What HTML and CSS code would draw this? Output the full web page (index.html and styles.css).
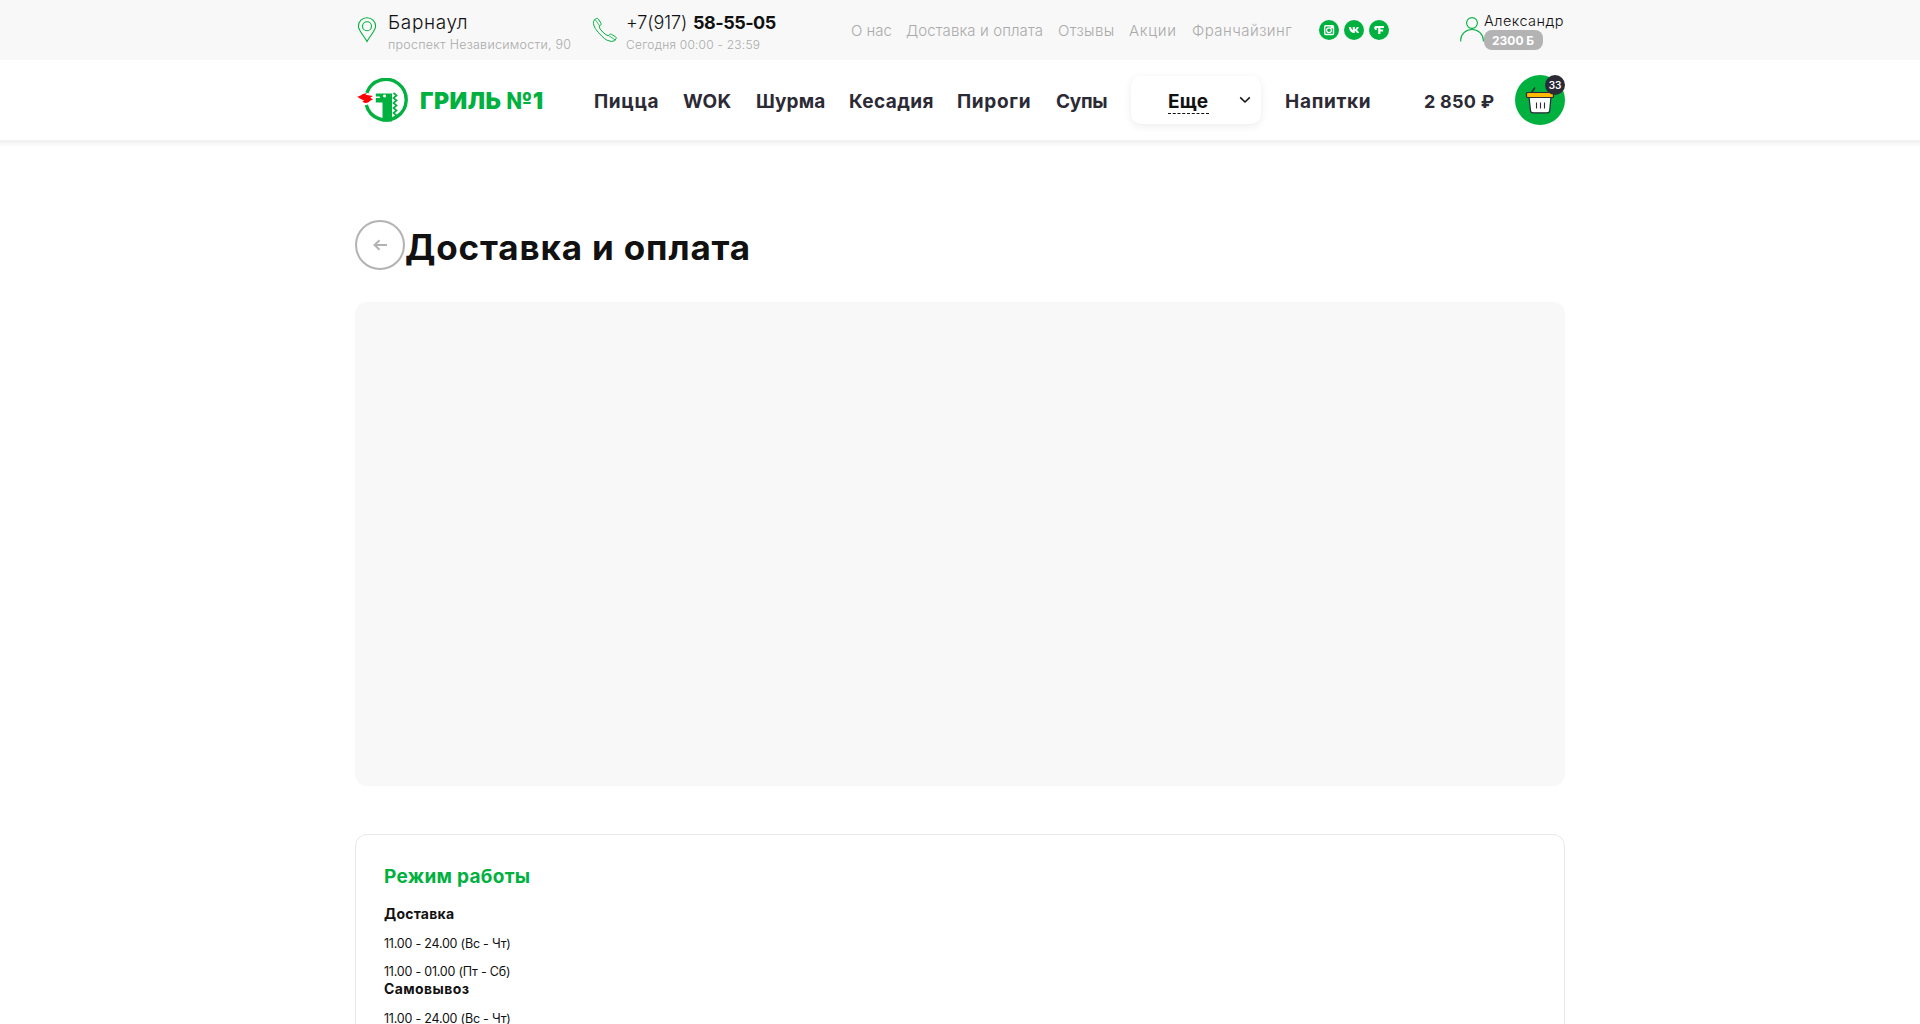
FILE: index.html
```
<!DOCTYPE html>
<html lang="ru">
<head>
<meta charset="utf-8">
<title>Доставка и оплата — Гриль №1</title>
<link rel="stylesheet" href="styles.css">
</head>
<body>
<header class="header">
  <div class="topbar">
    <div class="container topbar-row">
      <svg class="pin" width="20" height="26" viewBox="0 0 20 26" fill="none" stroke="#00b140" stroke-width="1.1"><path d="M10 24.5C8 20 1.4 13.800 1.400 9.300A8.600 8.600 0 0 1 18.600 9.300C18.600 13.800 12 20 10 24.500Z"/><circle cx="10" cy="9.300" r="4.500"/></svg>
      <div class="contact city">
        <a class="contact-main city-name">Барнаул</a>
        <span class="contact-sub city-address">проспект Независимости, 90</span>
      </div>
      <svg class="phone-icon" width="26" height="26" viewBox="0 0 26 26" fill="none" stroke="#00b140" stroke-width="1" stroke-linejoin="round"><path d="M2.400 2.800 4.600 1.400Q5.600 1 6.300 2L9 6.400Q9.500 7.500 8.600 8.200L7.300 9.200Q6.900 11.300 10.700 15T16.300 18.700L17.500 17.500Q18.300 16.800 19.400 17.300L23.600 19.800Q24.700 20.500 24 21.600L22.800 23.600Q20 25.600 15.200 23.300T3.200 11.400Q.2 6 2.400 2.800Z"/><path d="M3.200 2.400 7.600 9M16.500 18.500 23.300 23" stroke-width=".8"/></svg>
      <div class="contact phone">
        <a class="contact-main"><span class="phone-code">+7(917)</span><b class="phone-number">58-55-05</b></a>
        <span class="contact-sub phone-hours">Сегодня 00:00 - 23:59</span>
      </div>
      <nav class="links">
        <a class="link-about">О нас</a><a class="link-delivery">Доставка и оплата</a><a class="link-reviews">Отзывы</a><a class="link-offers">Акции</a><a class="link-franchise">Франчайзинг</a>
      </nav>
      <div class="socials">
        <svg width="20" height="20" viewBox="0 0 20 20"><circle cx="10" cy="10" r="10" fill="#00b140"/><rect x="5.700" y="5.700" width="8.800" height="8.800" rx="1" fill="none" stroke="#fff" stroke-width="1.400"/><circle cx="10" cy="10.200" r="2.400" fill="none" stroke="#fff" stroke-width="1.200"/><path d="M11.500 6h2.500v2.300h-2.500z" fill="#fff"/></svg>
        <svg width="20" height="20" viewBox="0 0 20 20"><circle cx="10" cy="10" r="10" fill="#00b140"/><path fill="#fff" d="M5 7h2c.3 1.500 1.100 2.900 1.800 3.100V7h2v2.400C11.600 9.200 12.400 8 12.800 7h2c-.3 1.200-1.100 2.300-1.900 3 .9.600 1.700 1.500 2.200 3h-2.200c-.4-1-1.100-1.700-2.100-1.900V13h-.5C7.100 13 5.300 10.800 5 7Z"/></svg>
        <svg width="20" height="20" viewBox="0 0 20 20"><circle cx="10" cy="10" r="10" fill="#00b140"/><path fill="#fff" d="M6.600 6H15v2.100h-3.600v1.300h2.700v2h-2.700V14H9.200V8.100H7.700v1.800H5.800V8.500H5Q5 6 6.600 6Z"/></svg>
      </div>
      <svg class="user-icon" width="24" height="26" viewBox="0 0 24 26" fill="none" stroke="#00b140" stroke-width="1.100"><circle cx="12" cy="6" r="5.400"/><path d="M.700 24.500V23A11.300 10.500 0 0 1 23.300 23v1.500"/></svg>
      <div class="user">
        <a class="user-name">Александр</a>
        <span class="bonus">2300 Б</span>
      </div>
    </div>
  </div>
  <div class="container nav-row">
    <a class="logo">
      <svg width="52" height="46" viewBox="0 0 52 46"><path d="M9.800 14.800A20.300 20.300 0 1 1 9.300 27" fill="none" stroke="#00b140" stroke-width="3.400"/><path fill="#00b140" fill-rule="evenodd" d="M18.800 15.500H35v28H25.500V24.500H18.800V20h4v-1.500h-4ZM27.500 16.500a1.500 1.500 0 1 0 .1 0Z"/><path d="m36.500 15 3 2.500-3 2.500 3 2.500-3 2.500 3 2.500-3 2.500 3 2.500-3 2.500 3 2.500-3 2.500" fill="none" stroke="#00b140" stroke-width="1.700"/><path fill="#f00" d="M0 18.500C4 18.500 5 15 10 15.200L8.500 16.800 16 18l-2.800 1.700L16 21.500 13.500 22.500c-3 3.500-7 2.800-8 .7l2-.7C5 22 3 20.500 0 18.500Z"/></svg>
      <span class="logo-name">ГРИЛЬ №1</span>
    </a>
    <nav class="menu">
      <a class="m-pizza">Пицца</a><a class="m-wok">WOK</a><a class="m-shurma">Шурма</a><a class="m-kesadia">Кесадия</a><a class="m-pies">Пироги</a><a class="m-soups">Супы</a>
      <div class="more"><span class="more-label">Еще</span><svg class="chevron" width="12" height="8" viewBox="0 0 12 8" fill="none" stroke="#111" stroke-width="1.500"><path d="m1.200 1.400 4.800 4.600 4.800-4.600"/></svg></div>
      <a class="m-drinks">Напитки</a>
    </nav>
    <span class="total">2 850 ₽</span>
    <a class="cart">
      <svg width="50" height="50" viewBox="0 0 50 50"><circle cx="25" cy="25" r="25" fill="#00b140"/><path d="m16.500 17.500 3.500-5" stroke="#2b2a35" stroke-width="1.400"/><path d="M14 21.500h22l-1.300 14q-.2 2.300-2.500 2.300H18q-2.300 0-2.500-2.300Z" fill="#fff" stroke="#2b2a35" stroke-width="1.200"/><rect x="11.500" y="17.500" width="27" height="5" rx="1" fill="#ffb900" stroke="#2b2a35" stroke-width="1.200"/><path d="M21.500 27.500v6M25.500 27.500v6M29.500 27.500v6" stroke="#2b2a35" stroke-width="1.100"/></svg>
      <span class="cart-count">33</span>
    </a>
  </div>
</header>
<main class="container">
  <div class="title-row">
    <a class="back"><svg width="14" height="12" viewBox="0 0 14 12" fill="none" stroke="#b3b3b3" stroke-width="2"><path d="M14 6H2M6.500 1.200 1.500 6l5 4.800"/></svg></a>
    <h1>Доставка и оплата</h1>
  </div>
  <div class="map"></div>
  <section class="card">
    <h2>Режим работы</h2>
    <h3 class="h-delivery">Доставка</h3>
    <p>11.00 - 24.00 (Вс - Чт)</p>
    <p>11.00 - 01.00 (Пт - Сб)</p>
    <h3 class="h-pickup">Самовывоз</h3>
    <p>11.00 - 24.00 (Вс - Чт)</p>
  </section>
</main>
</body>
</html>
```
FILE: styles.css
```
* { box-sizing: border-box; }
body { margin: 0; height: 1024px; overflow: hidden; background: #fff; color: #111; font-family: Inter, "Open Sans", sans-serif; }
svg { display: block; flex: none; }
h1, h2, h3, p { margin: 0; }
a, span, b, p, h1, h2, h3 { white-space: nowrap; }
.container { width: 1210px; margin: 0 auto; }

.header { height: 140px; box-shadow: 0 3px 0 #f2f2f2, 0 6px 0 #fafafa; }
.topbar { height: 60px; background: #f8f8f8; }
.topbar-row { display: flex; align-items: flex-start; }
.pin { margin: 17px 0 0 2px; }
.contact { display: flex; flex-direction: column; padding-top: 11px; }
.city { margin-left: 11px; width: 204px; }
.contact-main { font-weight: 300; font-size: 18px; line-height: 24px; }
.contact-sub { font-weight: 300; font-size: 12px; line-height: 16px; margin-top: 2px; color: #aaa; }
.contact .city-name { font-size: 19px; letter-spacing: .65px; }
.contact .city-address { font-size: 12.5px; letter-spacing: .26px; }
.phone-icon { margin-top: 17px; }
.phone { margin-left: 8px; width: 225px; }
.phone-code { display: inline-block; width: 67px; letter-spacing: -.1px; }
.phone-number { font-weight: 700; letter-spacing: -.5px; }
.phone-hours { letter-spacing: .22px; }
.links { display: flex; width: 468px; padding-top: 19px; font-weight: 300; font-size: 15px; line-height: 24px; color: #aaa; }
.link-about { width: 55px; }
.link-delivery { width: 152px; letter-spacing: .1px; }
.link-reviews { width: 71px; letter-spacing: .35px; }
.link-offers { width: 63px; letter-spacing: .7px; }
.link-franchise { letter-spacing: .45px; }
.socials { display: flex; gap: 5px; width: 141px; margin-top: 20px; }
.user-icon { margin-top: 17px; }
.user { display: flex; flex-direction: column; align-items: flex-start; padding-top: 10px; }
.user-name { font-size: 14.5px; line-height: 20px; font-weight: 300; letter-spacing: .45px; padding-top: 1px; margin-bottom: -1px; }
.bonus { width: 59px; height: 20px; padding-left: 8px; border-radius: 8px; background: #b3b3b3; color: #fff; font-weight: 700; font-size: 12px; line-height: 21px; }

.nav-row { display: flex; align-items: center; height: 80px; color: #2b2a35; font-weight: 700; font-size: 18px; }
.logo { display: flex; align-items: center; width: 239px; padding: 2px 0 0 2px; }
.logo-name { margin-left: 11px; color: #00b140; font-weight: 900; font-size: 23px; letter-spacing: .5px; }
.menu { display: flex; align-items: center; width: 830px; font-size: 19px; font-weight: 650; line-height: 24px; padding-top: 4px; }
.m-pizza { width: 89px; letter-spacing: .65px; }
.m-wok { width: 73px; letter-spacing: .3px; }
.m-shurma { width: 93px; letter-spacing: .1px; }
.m-kesadia { width: 108px; letter-spacing: .4px; }
.m-pies { width: 99px; letter-spacing: .65px; }
.m-soups { width: 75px; letter-spacing: -.3px; }
.more { display: flex; align-items: center; width: 130px; height: 48px; margin: -4px 24px 0 0; padding: 4px 0 0 37px; border-radius: 10px; background: #fff; box-shadow: 0 2px 8px rgba(0,0,0,.08); color: #111; }
.more-label { width: 41px; line-height: 23px; border-bottom: 1px dashed #111; margin-right: 30px; letter-spacing: .3px; }
.chevron { margin-top: -4px; }
.m-drinks { letter-spacing: .7px; }
.total { width: 91px; letter-spacing: .24px; padding-top: 3px; }
.cart { position: relative; }
.cart-count { position: absolute; top: 0; right: 0; width: 20px; height: 20px; border-radius: 50%; background: #2b2a35; color: #fff; font-size: 10px; font-weight: 600; line-height: 20px; text-align: center; }

.title-row { display: flex; align-items: center; margin-top: 80px; height: 50px; }
.back { display: flex; align-items: center; justify-content: center; width: 50px; height: 50px; border: 2px solid #b3b3b3; border-radius: 50%; }
h1 { font-size: 35px; line-height: 44px; font-weight: 700; letter-spacing: .85px; padding-top: 3px; }
.map { height: 484px; margin-top: 32px; border-radius: 12px; background: #f8f8f8; }
.card { height: 300px; margin-top: 48px; padding: 28px; border: 1px solid #e8e8e8; border-radius: 12px; }
h2 { color: #00b140; font-size: 19px; line-height: 28px; font-weight: 650; letter-spacing: .3px; }
h3 { font-size: 14px; line-height: 18px; font-weight: 700; }
.h-delivery { margin-top: 14px; letter-spacing: .23px; }
.h-pickup { letter-spacing: .41px; margin-top: -1px; }
p { font-size: 12.5px; line-height: 18px; letter-spacing: -.22px; margin-top: 10px; }
.h-delivery + p, .h-pickup + p { margin-top: 12px; }
```
